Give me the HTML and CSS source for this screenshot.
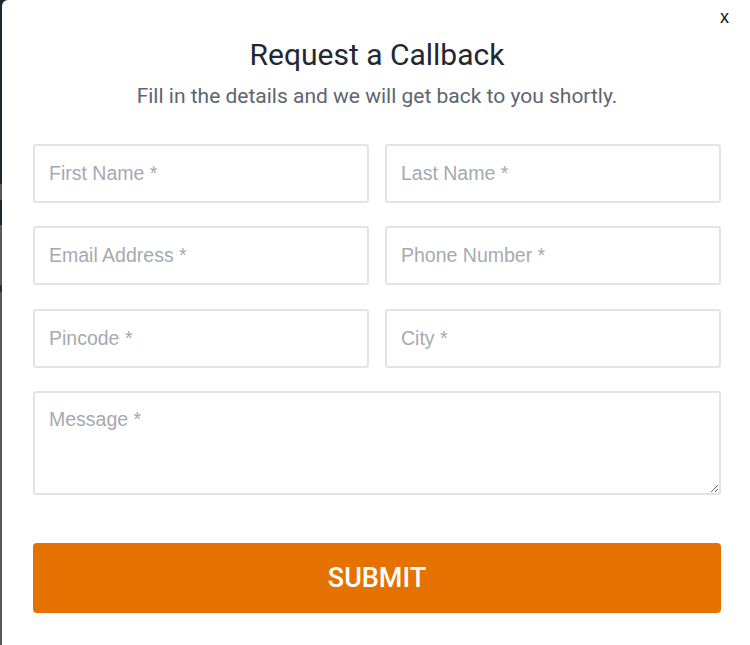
FILE: index.html
```html
<!DOCTYPE html>
<html lang="en">
<head>
    <meta charset="UTF-8">
    <meta name="viewport" content="width=device-width, initial-scale=1.0">
    <title>Request a Callback</title>
    <link rel="stylesheet" href="styles.css">
</head>
<body>
    <div class="backdrop"></div>

    <div class="modal">
        <button class="close">x</button>

        <header class="modal-head">
            <h2>Request a Callback</h2>
            <p>Fill in the details and we will get back to you shortly.</p>
        </header>

        <form class="callback-form">
            <div class="row">
                <input type="text" placeholder="First Name *">
                <input type="text" placeholder="Last Name *">
            </div>
            <div class="row">
                <input type="email" placeholder="Email Address *">
                <input type="tel" placeholder="Phone Number *">
            </div>
            <div class="row">
                <input type="text" placeholder="Pincode *">
                <input type="text" placeholder="City *">
            </div>
            <textarea placeholder="Message *"></textarea>

            <button type="submit" class="submit">SUBMIT</button>
        </form>
    </div>
</body>
</html>
```

FILE: styles.css
```css
body {
    margin: 0;
    padding: 0;
    display: flex;
    height: 645px;
    overflow: hidden;
    background: #1f2530;
    font-family: 'Roboto', sans-serif;
}

.backdrop {
    width: 2px;
    flex-shrink: 0;
    background: linear-gradient(#1f2530 0, #1f2530 184px, #5b5757 184px, #5b5757 200px, #1f2530 200px, #1f2530 225px, #5b5757 225px, #5b5757 285px, #2a3038 285px, #2a3038 292px, #5b5757 292px);
}

.modal {
    position: relative;
    flex: 1;
    background: #fff;
    border-radius: 6px 0 0 0;
    padding: 0 29px 0 31px;
}

.close {
    position: absolute;
    top: 7px;
    right: 21px;
    background: none;
    border: none;
    padding: 0;
    font-family: 'Liberation Sans', Arial, sans-serif;
    font-size: 18px;
    color: #111;
    cursor: pointer;
}

.modal-head {
    text-align: center;
    padding-top: 37px;
}

.modal-head h2 {
    margin: 0;
    font-size: 30px;
    line-height: 36px;
    font-weight: 400;
    color: #222831;
}

.modal-head p {
    margin: 10px 0 0;
    font-size: 21px;
    line-height: 26px;
    color: #5d6570;
}

.callback-form {
    margin-top: 35px;
    display: flex;
    flex-direction: column;
}

.row {
    display: grid;
    grid-template-columns: 1fr 1fr;
    gap: 16px;
    margin-bottom: 23px;
}

.row:nth-child(2) {
    margin-bottom: 24px;
}

input, textarea {
    box-sizing: border-box;
    width: 100%;
    margin: 0;
    border: 2px solid #e3e3e3;
    border-radius: 3px;
    padding: 0 14px;
    font-family: 'Liberation Sans', Arial, sans-serif;
    font-size: 19.5px;
    color: #333;
    outline: none;
}

input {
    height: 59px;
}

textarea {
    height: 104px;
    padding-top: 15px;
    resize: vertical;
}

input::placeholder, textarea::placeholder {
    color: #a5aab2;
}

.submit {
    margin-top: 48px;
    height: 70px;
    border: none;
    border-radius: 4px;
    background-color: #e57200;
    color: #fff;
    font-family: 'Roboto', sans-serif;
    font-size: 27px;
    font-weight: 500;
    cursor: pointer;
}
```
